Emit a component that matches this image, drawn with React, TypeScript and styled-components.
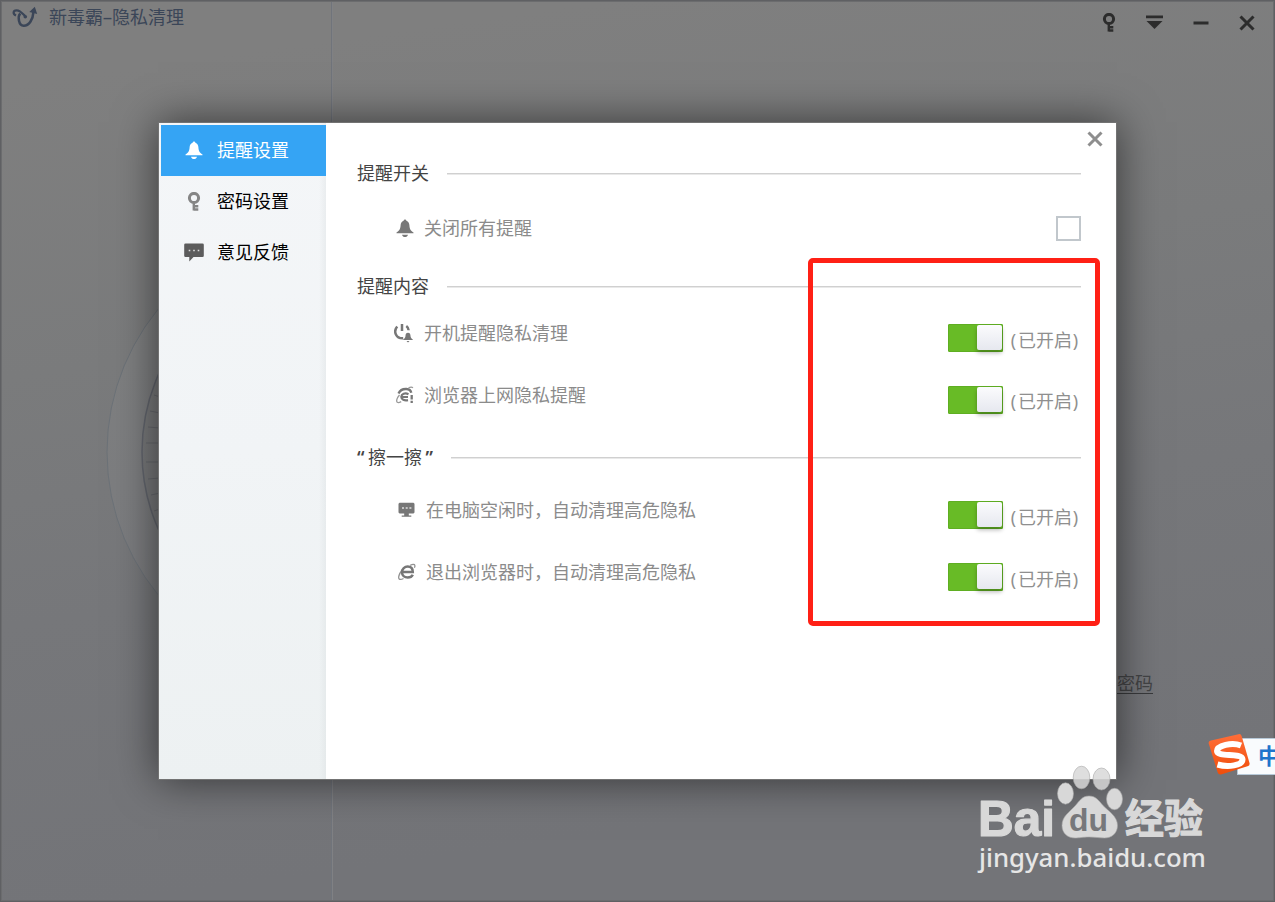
import { useState } from 'react';
import type { ReactNode } from 'react';
import styled, { createGlobalStyle } from 'styled-components';

const GlobalStyle = createGlobalStyle`
  body {
    margin: 0;
    overflow: hidden;
    font-family: 'Noto Sans', 'Noto Sans CJK SC', sans-serif;
    font-size: 18px;
  }
`;

const BellIcon = () => (
  <svg width='18' height='19' viewBox='0 0 18 19' fill='currentColor'>
    <path d='M9 0.500c.8 0 1.300.6 1.400 1.300 2 .7 2.800 2.300 3 4.400.2 3.500 1 5.300 4.100 7.300v.8H.5v-.8c3.100-2 3.900-3.800 4.100-7.300.2-2.100 1-3.700 3-4.400C7.700 1.100 8.200.5 9 .5zM6 15.800h6c-.4 1.500-1.600 2.300-3 2.300S6.400 17.300 6 15.800z' />
  </svg>
);

const KeyIcon = () => (
  <svg width='14' height='19' viewBox='0 0 14 19' fill='none' stroke='currentColor'>
    <circle cx='7' cy='6' r='4.600' strokeWidth='3' />
    <path d='M6.800 11v7.500M6.800 14.300h4.500M6.800 17.500h4.500' strokeWidth='2.400' />
  </svg>
);

const ChatIcon = () => (
  <svg width='20' height='19' viewBox='0 0 20 19'>
    <path
      d='M1.500 0.500h17a1.300 1.300 0 0 1 1.300 1.300v11a1.300 1.300 0 0 1-1.300 1.300H9.500L5.300 18.500v-4.400H1.500A1.300 1.300 0 0 1 0.200 12.800v-11A1.300 1.300 0 0 1 1.500 0.500z'
      fill='currentColor'
    />
    <path d='M4.700 7.500h1.600M9.200 7.500h1.600M13.700 7.500h1.600' stroke='#ddd' strokeWidth='1.600' />
  </svg>
);

const PowerBellIcon = () => (
  <svg width='19' height='20' viewBox='0 0 19 20' fill='none' stroke='currentColor'>
    <path d='M3.200 3.500C-1 8.500 2 15.800 9.200 15.300M8 1v7M12.300 3c1.400 1 2.200 2.500 2.300 4.300' strokeWidth='2.500' />
    <path d='M14 9.800c1.700 0 2.400 1.300 2.500 3 .1 1.700.7 2.700 2.300 3.700v.6H9.200v-.6c1.600-1 2.200-2 2.300-3.700.1-1.700.8-3 2.500-3zM12.500 18h3L14 19.500z' fill='currentColor' stroke='none' />
  </svg>
);

const BrowserAlertIcon = () => (
  <svg width='18' height='18' viewBox='0 0 18 18' fill='none' stroke='currentColor'>
    <path d='M2.500 7.500C4 4 7 2.800 10.500 3c2.800.2 4.300 1.500 4.800 3.800' strokeWidth='2.300' />
    <path d='M12.500 8.200C9 6.500 5.500 8 5.300 10.800c0 2.800 3 4.200 6.700 3.400M5.500 11h6.500' strokeWidth='2.200' />
    <path d='M3.500 9C.8 12 0 15.300 1.300 16.300c1 .6 2.500.1 3.900-.7M12.500 1.800c1.800-.7 3.500-.8 4.500 0' strokeWidth='1.300' opacity='.75' />
    <path d='M15.700 9v4.500M15.700 14.800v2.200' strokeWidth='2.300' />
  </svg>
);

const MonitorIcon = () => (
  <svg width='18' height='16' viewBox='0 0 18 16'>
    <path d='M1.500 0.800h14l1 1v8.700l-1 1h-4.700v2h2.500v1.300H3.700v-1.300h2.500v-2H1.500l-1-1V1.800z' fill='currentColor' />
    <path d='M4 6h2M7.700 6h2M11.400 6h2' stroke='#ddd' strokeWidth='1.600' />
  </svg>
);

const BrowserIcon = () => (
  <svg width='18' height='18' viewBox='0 0 18 18' fill='none' stroke='currentColor'>
    <path d='M5 9h9.800C14.800 5.500 12.700 3.500 9.700 3.500S4 5.900 4 9.200s2.500 5.300 5.700 5.300c2.400 0 4.200-.9 5.100-2.800' strokeWidth='2.500' />
    <path d='M3.800 7.800C.8 10.800 0 15.300 1.300 16.100c1 .6 2.700.2 4.200-.6M12.200 2.300c2.300-1.100 4.400-1.200 4.700.1.200.7-.1 1.500-.5 2.300' strokeWidth='1.300' opacity='.8' />
  </svg>
);

const CloseIcon = () => (
  <svg width='16' height='16' viewBox='0 0 16 16' fill='none' stroke='currentColor' strokeWidth='3'>
    <path d='M1.500 1.500l13 13M14.500 1.500l-13 13' />
  </svg>
);

const BrandIcon = () => (
  <svg width='26' height='22' viewBox='0 0 26 22' fill='none' stroke='#3b4658' strokeWidth='2.500'>
    <path d='M4 9.500C.5 8 1 4.500 4.500 4.300c3.500-.1 5.500 2.500 8.500 5.700' strokeWidth='2.200' />
    <path d='M8.200 7.500C5.500 10.500 6.500 19.500 11.700 19.700c5.300.1 9.300-6 9.800-14' />
    <path d='M17.300 6L22.800.8l2.400 7.200z' fill='#3b4658' stroke='none' />
    <circle cx='13.300' cy='10.700' r='1.800' fill='#3b4658' stroke='none' />
  </svg>
);

const DiscArt = () => (
  <Disc width='60' height='320' viewBox='100 292 60 320' fill='none'>
    <circle cx='332' cy='452' r='225' fill='#ffffff' fillOpacity='0.03' stroke='#6c7278' />
    <circle cx='333' cy='452' r='191' fill='#000' fillOpacity='0.04' stroke='#62656d' strokeWidth='1.500' />
    <path d='M154 395l6 2M150 411l10 2M148 427l12 1M146 443h14M146 462h14M148 479l12-1M151 495l9-2M154 511l6-2' stroke='#66686d' />
  </Disc>
);

const navItems = [
  { label: '提醒设置', icon: <BellIcon /> },
  { label: '密码设置', icon: <KeyIcon /> },
  { label: '意见反馈', icon: <ChatIcon /> },
];

interface OptionProps {
  icon: ReactNode;
  label: string;
  indent?: number;
  gap?: number;
  stateOffset?: number;
}

const SwitchOption = ({ icon, label, indent = 0, gap = 34, stateOffset = 4 }: OptionProps) => {
  const [on, setOn] = useState(true);

  return (
    <OptionRow $gap={gap}>
      <OptionLabel $indent={indent}>
        <OptionIcon>{icon}</OptionIcon>
        {label}
      </OptionLabel>
      <Switch $on={on} onClick={() => setOn(!on)}>
        <Knob />
      </Switch>
      <SwitchState $offset={stateOffset}>
        <Paren>(</Paren>
        {on ? '已开启' : '已关闭'}
        <Paren>)</Paren>
      </SwitchState>
    </OptionRow>
  );
};

const App = () => {
  const [active, setActive] = useState(0);

  return (
    <Window>
      <GlobalStyle />
      <LeftPane>
        <Title>
          <BrandIcon />
          <TitleText>
            新毒霸<Dash>-</Dash>隐私清理
          </TitleText>
        </Title>
        <DiscArt />
      </LeftPane>
      <RightPane>
        <WindowControls>
          <KeyIcon />
          <svg width='17' height='15' viewBox='0 0 17 15' fill='currentColor'>
            <path d='M0 0.500h17v2.700H0zM0.500 6h16L8.500 14z' />
          </svg>
          <svg width='16' height='4' viewBox='0 0 16 4' fill='currentColor'>
            <path d='M0.500 0.500h15v3H0.500z' />
          </svg>
          <CloseIcon />
        </WindowControls>
        <PasswordLink>密码</PasswordLink>
      </RightPane>

      <Dialog>
        <Sidebar>
          {navItems.map((item, idx) => (
            <NavItem key={item.label} $active={idx === active} onClick={() => setActive(idx)}>
              <NavIcon $dim={idx === 1}>{item.icon}</NavIcon>
              <NavLabel>{item.label}</NavLabel>
            </NavItem>
          ))}
        </Sidebar>
        <Content>
          <DialogHeader>
            <CloseIcon />
          </DialogHeader>
          <SectionTitle>
            <SectionText>提醒开关</SectionText>
          </SectionTitle>
          <CheckRow>
            <OptionLabel>
              <OptionIcon>
                <BellIcon />
              </OptionIcon>
              关闭所有提醒
            </OptionLabel>
            <CheckBox />
          </CheckRow>
          <SectionTitle>
            <SectionText>提醒内容</SectionText>
          </SectionTitle>
          <OptionList>
            <SwitchOption icon={<PowerBellIcon />} label='开机提醒隐私清理' indent={-2} />
            <SwitchOption icon={<BrowserAlertIcon />} label='浏览器上网隐私提醒' stateOffset={2} gap={32} />
          </OptionList>
          <SectionTitle>
            <SectionText>
              <Quote $side='left'>“</Quote>擦一擦<Quote $side='right'>”</Quote>
            </SectionText>
          </SectionTitle>
          <OptionList $spacious>
            <SwitchOption icon={<MonitorIcon />} label='在电脑空闲时，自动清理高危隐私' indent={2} />
            <SwitchOption icon={<BrowserIcon />} label='退出浏览器时，自动清理高危隐私' indent={2} />
          </OptionList>
        </Content>
      </Dialog>

      <Highlight />
      <ImeBar>中</ImeBar>
      <ImeLogo width='44' height='44' viewBox='0 0 44 44'>
        <defs>
          <linearGradient id='ime' x1='0' y1='0' x2='0' y2='1'>
            <stop offset='0' stopColor='#ff6d38' />
            <stop offset='1' stopColor='#f04e0b' />
          </linearGradient>
        </defs>
        <path d='M3 6.500L30.500.2q2.500-.5 3.200 2L41.500 29q.6 2.500-2 3.300L13 40.500q-2.500.5-3.300-2L.7 9.500Q.2 7 3 6.500z' fill='url(#ime)' />
        <path d='M33 11.500C24 8 9 11.500 9 17c0 6.500 25 1.500 25.500 8.300C34.800 31.500 20 33.500 9.500 30.500' fill='none' stroke='#fff' strokeWidth='6' />
      </ImeLogo>
      <Watermark width='240' height='120' viewBox='970 760 240 120'>
        <g fill='#d8d8d8' stroke='#a8a8a8' strokeWidth='0.600'>
          <ellipse cx='1065.500' cy='793.500' rx='8' ry='10.700' />
          <ellipse cx='1081.500' cy='777.500' rx='8.300' ry='11.300' fillOpacity='0.850' />
          <ellipse cx='1101.500' cy='779' rx='8.500' ry='11' fillOpacity='0.850' />
          <ellipse cx='1114.500' cy='799' rx='8' ry='10.700' />
          <path d='M1089 796c7 0 10 5 14 9.500 6 6 14.500 11 14.500 20 0 8-6 12.500-13 12.500-5 0-9-1-15.500-1s-9 1-14 1c-7 0-13-4.500-13-12.500 0-9 7-13 13-19.500 4.500-5 7-10 14-10z' />
        </g>
        <g fill='#d8d8d8' stroke='#d8d8d8' strokeWidth='1.200' strokeLinejoin='round'>
          <LogoText x='978' y='836' fontSize='50' textLength='77' lengthAdjust='spacingAndGlyphs'>Bai</LogoText>
          <LogoText x='1125' y='833' fontSize='40' textLength='78' lengthAdjust='spacingAndGlyphs'>经验</LogoText>
        </g>
        <LogoText x='1069' y='831' fontSize='31' fill='#77787b' textLength='39' lengthAdjust='spacingAndGlyphs'>du</LogoText>
        <UrlText x='979' y='867' fontSize='25' fill='#e6e6e6' textLength='227' lengthAdjust='spacingAndGlyphs'>jingyan.baidu.com</UrlText>
      </Watermark>
    </Window>
  );
};
export default App;

const Window = styled.div`
  position: relative;
  display: grid;
  grid-template-columns: 330px 1fr;
  width: 1275px;
  height: 902px;
  box-sizing: border-box;
  padding: 2px;
  overflow: hidden;
  background: linear-gradient(172deg, #7f7f7f 8%, #7a7b7c 35%, #76777a 58%, #737478 85%);
  box-shadow: inset 0 0 0 1px #5f6063, inset 0 0 0 2px #6b6c6e;
`;

const LeftPane = styled.div`
  border-right: 1px solid #70747b;
`;

const RightPane = styled.div`
  display: flex;
  flex-direction: column;
  border-left: 1px solid #808184;
`;

const Title = styled.div`
  display: flex;
  align-items: center;
  height: 30px;
  padding-left: 10px;
  gap: 11px;
`;

const TitleText = styled.div`
  margin-top: -2px;
  color: #3b4658;
  white-space: nowrap;
`;

const Dash = styled.span`
  display: inline-block;
  width: 9px;
  text-align: center;
  transform: scaleX(1.8);
`;

const Disc = styled.svg`
  display: block;
  margin: 260px 0 0 98px;
`;

const WindowControls = styled.div`
  display: flex;
  align-items: center;
  justify-content: flex-end;
  gap: 30px;
  height: 41px;
  padding-right: 18px;
  color: #2c2c2c;
`;

const PasswordLink = styled.div`
  align-self: flex-end;
  margin: 629px 120px 0 0;
  border-bottom: 1px solid #393a3c;
  color: #434446;
  line-height: 20px;
  padding-top: 1px;
`;

const Dialog = styled.div`
  position: absolute;
  left: 158px;
  top: 122px;
  display: flex;
  width: 959px;
  height: 658px;
  box-sizing: border-box;
  border: 1px solid #737373;
  background: #fff;
  box-shadow: 0 0 40px rgba(0, 0, 0, 0.56);
`;

const Sidebar = styled.div`
  width: 167px;
  box-sizing: border-box;
  padding: 2px 0 0 2px;
  background:
    linear-gradient(90deg, transparent 160px, rgba(210, 216, 218, 0.3)),
    linear-gradient(#f4f6f8, #f1f4f6 50%, #edf1f2);
`;

const NavItem = styled.div<{ $active: boolean }>`
  display: flex;
  align-items: center;
  gap: 13px;
  height: 51px;
  padding-left: 22px;
  cursor: pointer;
  color: ${({ $active }) => ($active ? '#fff' : '#000')};
  background: ${({ $active }) => ($active ? '#35a4f4' : 'transparent')};

  svg {
    color: ${({ $active }) => ($active ? '#fff' : 'inherit')};
  }
`;

const NavIcon = styled.span<{ $dim: boolean }>`
  display: flex;
  justify-content: center;
  width: 21px;
  color: ${({ $dim }) => ($dim ? '#858585' : '#5c5c5c')};
`;

const NavLabel = styled.span`
  margin-top: -3px;
`;

const Content = styled.div`
  flex: 1;
  padding: 0 35px 0 31px;
  color: #444;
`;

const DialogHeader = styled.div`
  display: flex;
  justify-content: flex-end;
  height: 31px;
  margin-right: -22px;
  padding-top: 8px;
  color: #8e8e8e;
`;

const SectionTitle = styled.div`
  display: flex;
  align-items: center;
  gap: 18px;
  height: 24px;

  &::after {
    content: '';
    flex: 1;
    height: 1px;
    border-bottom: 1px solid #e9e9e9;
    background: #d0d0d0;
  }
`;

const SectionText = styled.span`
  margin-top: -4px;
  white-space: nowrap;
`;

const CheckRow = styled.div`
  display: flex;
  align-items: center;
  justify-content: space-between;
  height: 26px;
  margin: 29px 0 34px;
`;

const OptionList = styled.div<{ $spacious?: boolean }>`
  padding-top: ${({ $spacious }) => ($spacious ? 31 : 25)}px;
`;

const OptionRow = styled.div<{ $gap: number }>`
  display: flex;
  align-items: center;
  height: 28px;
  margin-bottom: ${({ $gap }) => $gap}px;

  & > :first-child {
    margin: 0 auto 10px 0;
  }
`;

const OptionLabel = styled.div<{ $indent?: number }>`
  display: flex;
  align-items: center;
  gap: ${({ $indent = 0 }) => ($indent < 0 ? 8 - $indent : 8)}px;
  padding-left: ${({ $indent = 0 }) => 37 + $indent}px;
  color: #8b8b8b;
  line-height: 24px;
  white-space: nowrap;
`;

const OptionIcon = styled.span`
  display: flex;
  justify-content: center;
  width: 22px;
  color: #777;
`;

const CheckBox = styled.div`
  width: 25px;
  height: 25px;
  box-sizing: border-box;
  border: 2px solid #c1c7cc;
  background: #fff;
`;

const Switch = styled.div<{ $on: boolean }>`
  display: flex;
  justify-content: ${({ $on }) => ($on ? 'flex-end' : 'flex-start')};
  width: 55px;
  height: 28px;
  box-sizing: border-box;
  border: 1px solid #5fae22;
  border-radius: 1px;
  background: ${({ $on }) => ($on ? '#68bb26' : '#c8c8c8')};
  cursor: pointer;
`;

const Knob = styled.div`
  width: 25px;
  height: 25px;
  border-radius: 2px;
  background: linear-gradient(#fbfbfd, #e6e8ef);
  box-shadow: 0 3px 4px rgba(0, 0, 0, 0.28);
`;

const SwitchState = styled.div<{ $offset: number }>`
  width: 72px;
  margin: ${({ $offset }) => $offset}px 0 0 6px;
  color: #8f8f8f;
  line-height: 24px;
  white-space: nowrap;
`;

const Paren = styled.span`
  display: inline-block;
  width: 9px;
  text-align: center;

  &:last-child {
    width: 7px;
  }
`;

const Quote = styled.span<{ $side: 'left' | 'right' }>`
  display: inline-block;
  width: 11px;
  font-weight: 600;
  text-align: ${({ $side }) => $side};
`;

/* red frame drawn over the switches */
const Highlight = styled.div`
  position: absolute;
  left: 808px;
  top: 258px;
  width: 292px;
  height: 368px;
  box-sizing: border-box;
  border: 5px solid #ff2015;
  border-radius: 5px;
  pointer-events: none;
`;

const ImeBar = styled.div`
  position: absolute;
  left: 1237px;
  top: 738px;
  width: 40px;
  height: 37px;
  box-sizing: border-box;
  padding-left: 20px;
  border: 1px solid #b7c9d8;
  background: #f9fbfd;
  color: #1f75cc;
  font-size: 22px;
  font-weight: bold;
  line-height: 33px;
`;

const ImeLogo = styled.svg`
  position: absolute;
  left: 1208px;
  top: 734px;
`;

const Watermark = styled.svg`
  position: absolute;
  left: 970px;
  top: 760px;
`;

const LogoText = styled.text`
  font-family: 'Liberation Sans', 'Noto Sans CJK SC', sans-serif;
  font-weight: bold;
`;

const UrlText = styled.text`
  font-family: 'Noto Sans', sans-serif;
  font-weight: 500;
`;
